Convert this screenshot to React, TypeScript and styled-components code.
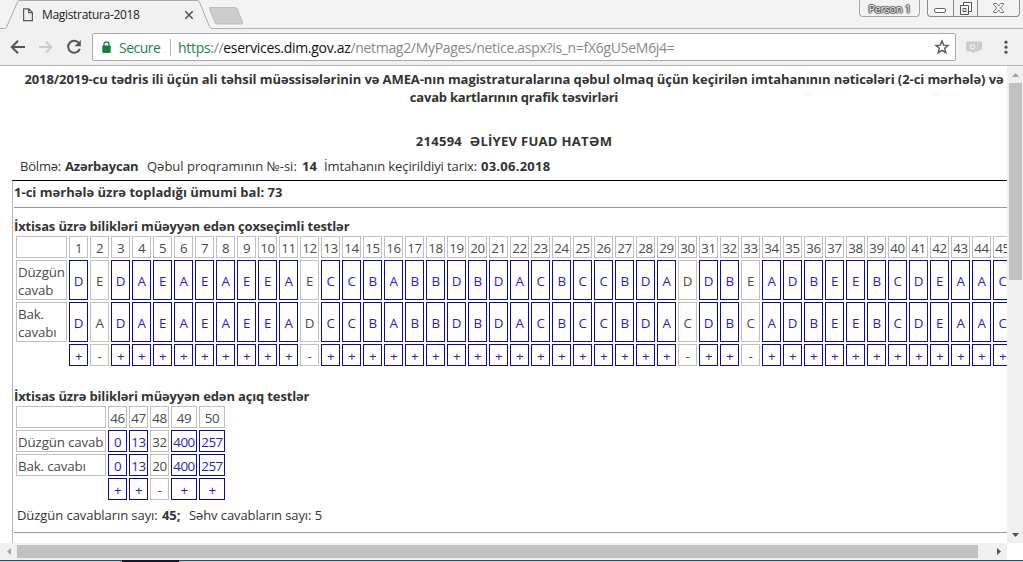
import React from 'react';
import styled, { createGlobalStyle } from 'styled-components';

const GlobalStyle = createGlobalStyle`
  * { box-sizing: border-box; }
  html, body { margin: 0; padding: 0; overflow: hidden; background: #fff; }
  body { font-family: 'Open Sans', 'Noto Sans', sans-serif; font-size: 13px; color: #333; }
`;

const Window = styled.div`
  width: 1023px;
  height: 562px;
  display: flex;
  flex-direction: column;
  overflow: hidden;
`;

const TabStrip = styled.header`
  position: relative;
  height: 29px;
  flex: none;
  display: flex;
  background: #f3f3f3;
  border-bottom: 1px solid #b4b4b4;
`;

const TabShape = styled.svg`
  position: absolute;
  left: 0;
  top: 0;
`;

const TabContent = styled.div`
  position: relative;
  display: flex;
  align-items: center;
  width: 200px;
  height: 28px;
  padding: 1px 0 0 22px;
  flex: none;
`;

const TabTitle = styled.span`
  width: 141px;
  margin-left: 8px;
  margin-right: 1px;
  font-size: 12px;
  letter-spacing: -0.32px;
  color: #222;
  white-space: nowrap;
`;

const WindowControls = styled.div`
  margin-left: auto;
  margin-right: 3px;
  display: flex;
  gap: 7px;
  height: 17px;
`;

const Profile = styled.div`
  width: 61px;
  height: 17px;
  border: 1px solid #a5a5a5;
  border-top: 0;
  border-radius: 0 0 4px 4px;
  font-size: 11px;
  line-height: 17px;
  letter-spacing: -0.35px;
  text-align: center;
  color: #f6f6f6;
  text-shadow: 0 0 1px #333, 1px 0 1px #444, -1px 0 1px #444, 0 1px 1px #555, 0 -1px 1px #555;
`;

const ButtonGroup = styled.div`
  display: flex;
  height: 17px;
  width: 93px;
  border: 1px solid #8c8c8c;
  border-top: 0;
  border-radius: 0 0 4px 4px;
`;

const WindowButton = styled.div<{ $w: number }>`
  width: ${(p) => p.$w}px;
  display: flex;
  justify-content: center;
  & + & { border-left: 1px solid #8c8c8c; }
`;

const Toolbar = styled.div`
  height: 37px;
  flex: none;
  display: flex;
  align-items: center;
  padding: 0 9px 0 10px;
  background: #f1f1f1;
  border-bottom: 1px solid #b4b4b4;
`;

const NavButtons = styled.div`
  display: flex;
  width: 82px;
  gap: 12px;
`;

const AddressBar = styled.div`
  width: 864px;
  height: 28px;
  display: flex;
  align-items: center;
  padding: 0 5px 0 9px;
  background: #fff;
  border: 1px solid #a9a9a9;
  border-radius: 2px;
  font-size: 14px;
  white-space: nowrap;
`;

const Secure = styled.span`
  width: 51px;
  margin-left: 8px;
  color: #21834a;
  letter-spacing: -0.5px;
`;

const Divider = styled.i`
  width: 1px;
  height: 17px;
  background: #b5b5b5;
  margin-right: 7px;
`;

const Url = styled.span<{ $sp: number }>`
  flex: 1;
  color: #888;
  letter-spacing: ${(p) => p.$sp}px;
  em { font-style: normal; color: #21834a; }
  b { font-weight: 400; color: #111; }
`;

const ToolbarEnd = styled.div`
  flex: 1;
  display: flex;
  align-items: center;
  justify-content: space-between;
  padding-left: 9px;
`;

const Viewport = styled.div`
  height: 477px;
  flex: none;
  display: flex;
`;

const Page = styled.main`
  width: 1007px;
  overflow: hidden;
  background: #fff;
`;

const Titles = styled.div`
  width: 1028px;
  padding-top: 4px;
  text-align: center;
  font-weight: 700;
  white-space: nowrap;
`;

const Line = styled.div<{ $sp: number; $h?: number }>`
  height: ${(p) => p.$h ?? 18}px;
  line-height: ${(p) => p.$h ?? 18}px;
  letter-spacing: ${(p) => p.$sp}px;
`;

const Gap = styled.div<{ $h: number }>`
  height: ${(p) => p.$h}px;
`;

const Meta = styled.div`
  display: flex;
  height: 18px;
  margin: 7px 0 5px 20px;
  line-height: 18px;
  white-space: nowrap;
`;

const Run = styled.span<{ $w: number; $sp: number; $bold?: boolean }>`
  width: ${(p) => p.$w}px;
  flex: none;
  font-weight: ${(p) => (p.$bold ? 700 : 400)};
  letter-spacing: ${(p) => p.$sp}px;
`;

const Results = styled.section`
  width: 1020px;
  height: 363px;
  margin-left: 12px;
  border-left: 1px solid #b8b8b8;
  border-top: 1px solid #000;
  padding: 2px 0 0 1px;
`;

const Heading = styled.h3<{ $sp: number }>`
  height: 18px;
  margin: 0;
  font-size: 13px;
  line-height: 18px;
  font-weight: 700;
  letter-spacing: ${(p) => p.$sp}px;
  white-space: nowrap;
`;

const Rule = styled.hr`
  height: 1px;
  margin: 0;
  border: 0;
  background: #999;
`;

const AnswerGrid = styled.div<{ $cols: string; $rows: string }>`
  display: grid;
  grid-template-columns: ${(p) => p.$cols};
  grid-template-rows: ${(p) => p.$rows};
  gap: 2px;
  margin-left: 2px;
`;

const Cell = styled.div<{ $ok?: boolean }>`
  display: flex;
  align-items: center;
  justify-content: center;
  border: 1px solid ${(p) => (p.$ok ? '#0a0aa4' : '#c0c0c0')};
  color: ${(p) => (p.$ok ? '#2a1ccc' : '#4a4a4a')};
  font-size: 13.33px;
  letter-spacing: -0.4px;
  line-height: 18px;
  padding-top: 1px;
`;

const LabelCell = styled(Cell)<{ $sp?: number }>`
  justify-content: flex-start;
  padding-left: 1px;
  letter-spacing: ${(p) => p.$sp ?? 0}px;
`;

const Summary = styled.div`
  display: flex;
  height: 18px;
  margin: 6px 0 0 3px;
  line-height: 18px;
  white-space: nowrap;
`;

const VerticalScroll = styled.aside`
  width: 16px;
  display: flex;
  flex-direction: column;
  align-items: center;
  background: #f0f0f0;
`;

const VThumb = styled.div`
  width: 13px;
  height: 197px;
  margin-left: 1px;
  background: #c1c1c1;
`;

const Arrow = styled.div<{ $w: number; $h: number }>`
  width: ${(p) => p.$w}px;
  height: ${(p) => p.$h}px;
  flex: none;
  display: flex;
  align-items: center;
  justify-content: center;
`;

const BottomScroll = styled.div`
  height: 17px;
  flex: none;
  width: 1007px;
  display: flex;
  align-items: center;
  background: #f0f0f0;
`;

const HThumb = styled.div`
  width: 961px;
  height: 13px;
  margin-right: 12px;
  background: #c1c1c1;
`;

const Taskbar = styled.footer`
  height: 2px;
  flex: none;
  background: linear-gradient(90deg, transparent 122px, #17172a 122px 179px, transparent 179px),
    linear-gradient(#3c4a5e 50%, #b9c9dc 50%);
`;

const KEY = 'DEDAEAEAEEAECCBABBDBDACBCCBDADDBEADBEEBCDEAAC'.split('');
const GIVEN = 'DADAEAEAEEADCCBABBDBDACBCCBDACDBCADBEEBCDEAAC'.split('');
const OPEN_KEY = ['0', '13', '32', '400', '257'];
const OPEN_GIVEN = ['0', '13', '20', '400', '257'];

type AnswersProps = {
  first: number;
  answers: string[];
  given: string[];
  cols: string;
  rows: string;
  labels: React.ReactNode[];
  labelSpacing: number;
};

function Answers({ first, answers, given, cols, rows, labels, labelSpacing }: AnswersProps) {
  const ok = answers.map((a, i) => a === given[i]);
  return (
    <AnswerGrid $cols={cols} $rows={rows}>
      <LabelCell />
      {answers.map((_, i) => <Cell key={i}>{first + i}</Cell>)}
      <LabelCell $sp={labelSpacing}><span>{labels[0]}</span></LabelCell>
      {answers.map((a, i) => <Cell key={i} $ok={ok[i]}>{a}</Cell>)}
      <LabelCell $sp={labelSpacing}><span>{labels[1]}</span></LabelCell>
      {given.map((a, i) => <Cell key={i} $ok={ok[i]}>{a}</Cell>)}
      <span />
      {ok.map((o, i) => <Cell key={i} $ok={o}>{o ? '+' : '-'}</Cell>)}
    </AnswerGrid>
  );
}

export default function App() {
  return (
    <Window>
      <GlobalStyle />
      <TabStrip>
        <TabShape width="250" height="29" viewBox="0 0 250 29">
          <path d="M0 28.5H4.5C6 28.5 6.5 27 7 26L17.5 2C18 .8 18.5 .5 20 .5H197C198.5 .5 199 1 199.500 2L209.500 26.500C210 28 210.500 28.500 212 28.500V29H0z" fill="#f1f1f1" />
          <path d="M0 28.5H4.5C6 28.5 6.5 27 7 26L17.5 2C18 .8 18.5 .5 20 .5H197C198.5 .5 199 1 199.500 2L209.500 26.500C210 28 210.500 28.500 212 28.500" fill="none" stroke="#ababab" />
          <path d="M210 7.500H235Q236.500 7.500 237 8.500L242.500 22Q243 24 241.500 24H217Q215.500 24 215 22.500L209.500 9Q209 7.500 210 7.500z" fill="#cdcdcd" stroke="#bdbdbd" />
        </TabShape>
        <TabContent>
          <svg width="12" height="14" viewBox="0 0 12 14" fill="none" stroke="#5a5a5a" strokeWidth="1.2">
            <path d="M1.600 .8H6.800L10.400 4.400V12.700H1.600zM6.600 .8V4.600H10.400" />
          </svg>
          <TabTitle>Magistratura-2018</TabTitle>
          <svg width="10" height="10" viewBox="0 0 10 10" stroke="#555" strokeWidth="1.6">
            <path d="M1.300 1.300L8.700 8.700M8.700 1.300L1.300 8.700" />
          </svg>
        </TabContent>
        <WindowControls>
          <Profile>Person 1</Profile>
          <ButtonGroup>
            <WindowButton $w={25}>
              <svg width="14" height="16" fill="#fff" stroke="#666"><rect x="1.5" y="8.5" width="11" height="4" rx="1.5" /></svg>
            </WindowButton>
            <WindowButton $w={25}>
              <svg width="14" height="16" fill="#fff" stroke="#555"><path d="M4.500 2.500H12.500V11.500H4.500z" /><path d="M1.500 5.500H9.500V14.500H1.500zM4 8.500H7V11.500H4z" /></svg>
            </WindowButton>
            <WindowButton $w={42}>
              <svg width="13" height="16" fill="#fff" stroke="#666" strokeWidth=".9"><path d="M1.500 3.500H4.500L6.500 6L8.500 3.500H11.500V4.500L8.500 8L11.500 11.500V12.500H8.500L6.500 10L4.500 12.500H1.500V11.500L4.500 8L1.500 4.500z" /></svg>
            </WindowButton>
          </ButtonGroup>
        </WindowControls>
      </TabStrip>

      <Toolbar>
        <NavButtons>
          <svg width="16" height="16" viewBox="0 0 16 16" fill="none" stroke="#555" strokeWidth="2"><path d="M15 8H2.500M8 1.800L1.800 8L8 14.200" /></svg>
          <svg width="16" height="16" viewBox="0 0 16 16" fill="none" stroke="#ccc" strokeWidth="1.8"><path d="M1 8H13M8 2.500L13.500 8L8 13.500" /></svg>
          <svg width="16" height="16" viewBox="0 0 16 16"><path d="M12.900 4A6 6 0 1 0 13.800 9.800" fill="none" stroke="#555" strokeWidth="2" /><path d="M14.800 1V7.200H8.600z" fill="#555" /></svg>
        </NavButtons>
        <AddressBar>
          <svg width="9" height="13" viewBox="0 0 9 13"><rect x=".3" y="4.5" width="8.4" height="7.5" rx=".8" fill="#187d3c" /><path d="M2 5V3.300A2.500 2.500 0 0 1 7 3.300V5" fill="none" stroke="#187d3c" strokeWidth="1.3" /></svg>
          <Secure>Secure</Secure>
          <Divider />
          <Url $sp={-0.31}><em>https</em>://<b>eservices.dim.gov.az</b>/netmag2/MyPages/netice.aspx?is_n=fX6gU5eM6j4=</Url>
          <svg width="16" height="16" viewBox="0 0 16 16" fill="none" stroke="#555" strokeWidth="1.4"><path d="M8 2L9.700 6.100L14.100 6.400L10.700 9.300L11.800 13.700L8 11.300L4.200 13.700L5.300 9.300L1.900 6.400L6.300 6.100z" /></svg>
        </AddressBar>
        <ToolbarEnd>
          <svg width="18" height="14" viewBox="0 0 18 14"><path d="M2 1.500H14L17 2V9L13 11.500H10.500L8.500 13.500L6.500 11.500H2L1 10V3z" fill="#cbcbcb" /><circle cx="7.5" cy="6.7" r="2.8" fill="#ececec" /><circle cx="7.5" cy="6.700" r="1.4" fill="#c8c8c8" /><path d="M13 2.500V10" stroke="#dadada" /></svg>
          <svg width="16" height="16" viewBox="0 0 16 16" fill="#555"><circle cx="8" cy="3.2" r="1.6" /><circle cx="8" cy="8.2" r="1.6" /><circle cx="8" cy="13.2" r="1.6" /></svg>
        </ToolbarEnd>
      </Toolbar>

      <Viewport>
        <Page>
          <Titles>
            <Line $sp={-0.083}>2018/2019-cu tədris ili üçün ali təhsil müəssisələrinin və AMEA-nın magistraturalarına qəbul olmaq üçün keçirilən imtahanının nəticələri (2-ci mərhələ) və</Line>
            <Line $sp={-0.22}>cavab kartlarının qrafik təsvirləri</Line>
            <Gap $h={26} />
            <Line $sp={0.3}>214594&nbsp; ƏLİYEV FUAD HATƏM</Line>
          </Titles>
          <Meta>
            <Run $w={45} $sp={-0.2}>Bölmə:</Run>
            <Run $w={82} $sp={-0.2} $bold>Azərbaycan</Run>
            <Run $w={155} $sp={0}>Qəbul proqramının №-si:</Run>
            <Run $w={22} $sp={0.1} $bold>14</Run>
            <Run $w={157} $sp={-0.1}>İmtahanın keçirildiyi tarix:</Run>
            <Run $w={76} $sp={0.25} $bold>03.06.2018</Run>
          </Meta>
          <Results>
            <Heading $sp={0.02}>1-ci mərhələ üzrə topladığı ümumi bal: 73</Heading>
            <Gap $h={6} />
            <Rule />
            <Gap $h={9} />
            <Heading $sp={-0.15}>İxtisas üzrə bilikləri müəyyən edən çoxseçimli testlər</Heading>
            <Gap $h={1} />
            <Answers
              first={1}
              answers={KEY}
              given={GIVEN}
              cols="51px repeat(45, 19px)"
              rows="22px 40px 40px 22px"
              labels={[<>Düzgün<br />cavab</>, <>Bak.<br />cavabı</>]}
              labelSpacing={-0.15}
            />
            <Gap $h={21} />
            <Heading $sp={-0.15}>İxtisas üzrə bilikləri müəyyən edən açıq testlər</Heading>
            <Gap $h={1} />
            <Answers
              first={46}
              answers={OPEN_KEY}
              given={OPEN_GIVEN}
              cols="90px 19px 19px 19px 26px 26px"
              rows="repeat(4, 22px)"
              labels={['Düzgün cavab', 'Bak. cavabı']}
              labelSpacing={-0.15}
            />
            <Summary>
              <Run $w={145} $sp={-0.06}>Düzgün cavabların sayı:</Run>
              <Run $w={27} $sp={-0.1} $bold>45;</Run>
              <Run $w={140} $sp={-0.1}>Səhv cavabların sayı: 5</Run>
            </Summary>
            <Gap $h={8} />
            <Rule />
          </Results>
        </Page>
        <VerticalScroll>
          <Arrow $w={16} $h={17}><svg width="7" height="4"><path d="M0 4L3.500 0L7 4z" fill="#a3a3a3" /></svg></Arrow>
          <VThumb />
          <Gap $h={246} />
          <Arrow $w={16} $h={17}><svg width="7" height="4"><path d="M0 0H7L3.500 4z" fill="#505050" /></svg></Arrow>
        </VerticalScroll>
      </Viewport>
      <BottomScroll>
        <Arrow $w={17} $h={17}><svg width="4" height="7"><path d="M4 0V7L0 3.500z" fill="#a3a3a3" /></svg></Arrow>
        <HThumb />
        <Arrow $w={17} $h={17}><svg width="4" height="7"><path d="M0 0V7L4 3.500z" fill="#505050" /></svg></Arrow>
      </BottomScroll>
      <Taskbar />
    </Window>
  );
}
